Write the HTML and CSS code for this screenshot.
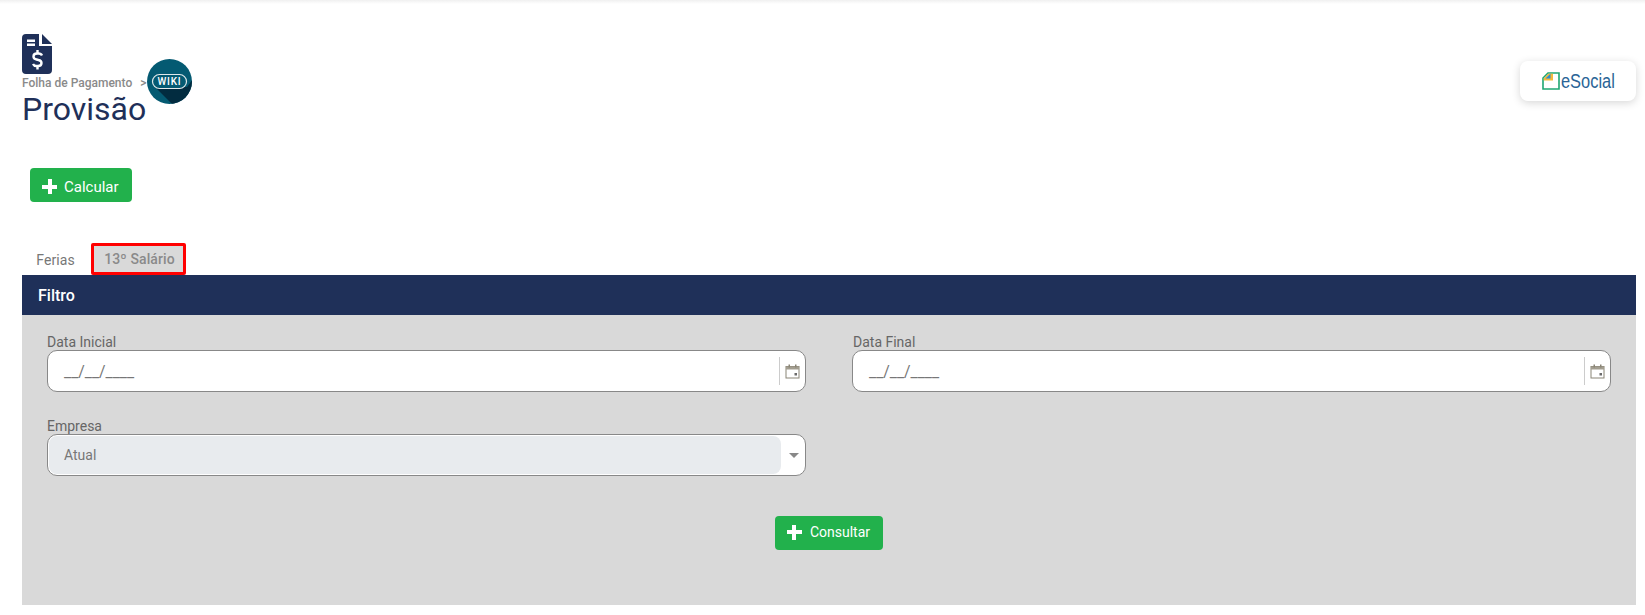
FILE: index.html
```html
<!DOCTYPE html>
<html lang="en">
<head>
  <meta charset="UTF-8">
  <title>Provisão</title>
  <link rel="stylesheet" href="styles.css">
</head>
<body>
  <div class="topbar"></div>

  <header class="page-head">
    <div class="head-left">
      <svg class="doc-icon" width="30" height="40" viewBox="0 0 30 40">
        <path fill="#1f3059" d="M4 0H17V12H30V36a4 4 0 0 1-4 4H4a4 4 0 0 1-4-4V4a4 4 0 0 1 4-4Z"/>
        <path fill="#1f3059" d="M20 0 30 10H20Z"/>
        <rect x="5" y="5.500" width="8" height="2.500" fill="#fff"/>
        <rect x="5" y="9.500" width="8" height="2.500" fill="#fff"/>
        <path fill="none" stroke="#fff" stroke-width="2.400" d="M20 21.500c-.6-1.300-2-2-3.500-2h-1.500c-2 0-3.500 1.200-3.500 3s1.200 2.600 3 3l2 .5c1.800.4 3 1.300 3 3s-1.500 3-3.500 3h-1.500c-1.500 0-2.900-.7-3.500-2"/>
        <path fill="none" stroke="#fff" stroke-width="2.400" d="M15.500 16v3.500M15.500 32v3.500"/>
      </svg>
      <div class="crumbs">
        <span>Folha de Pagamento</span>
        <span class="crumb-sep">&gt;</span>
        <span class="wiki">
          <svg width="45" height="45" viewBox="0 0 45 45">
            <defs><clipPath id="wikiClip"><circle cx="22.500" cy="22.500" r="22.500"/></clipPath></defs>
            <circle cx="22.500" cy="22.500" r="22.500" fill="#045a72"/>
            <path clip-path="url(#wikiClip)" fill="#022c40" d="M8 28H40L46 20V46H26Z"/>
            <rect x="5.500" y="15.500" width="34" height="14" rx="7" fill="#045a72" stroke="#dfe8ea" stroke-width="1.200"/>
            <text x="22.500" y="26" class="wiki-text" text-anchor="middle">WIKI</text>
          </svg>
        </span>
      </div>
      <h1 class="page-title">Provisão</h1>
    </div>
    <div class="esocial-card">
      <svg width="18" height="18" viewBox="0 0 18 18">
        <path d="M6 1H17V17H1V6Z" fill="#fff" stroke="#1fa672" stroke-width="1.600"/>
        <path d="M1.800 6.500 6.300 1.800H11V8.500H1.800Z" fill="#f5b93c"/>
        <path d="M3.500 6.500 8.500 1.800V6.500Z" fill="#2b8fd0"/>
      </svg>
      <span class="esocial-text">eSocial</span>
    </div>
  </header>

  <div class="actions">
    <button class="btn"><span class="plus"></span>Calcular</button>
  </div>

  <nav class="tabs">
    <a class="tab">Ferias</a>
    <a class="tab active">13º Salário</a>
  </nav>

  <section class="panel">
    <div class="panel-head">Filtro</div>
    <div class="panel-body">
      <div class="fields">
        <div class="field">
          <label>Data Inicial</label>
          <div class="input">
            <span class="mask">__/__/____</span>
            <span class="addon">
              <svg width="15" height="15" viewBox="0 0 15 15">
                <rect x="1" y="2.500" width="13" height="11.500" fill="#fff" stroke="#8a8577"/>
                <rect x="1" y="2.500" width="13" height="3" fill="#a39e90"/>
                <rect x="3.500" y="0.500" width="1.500" height="3" fill="#8a8577"/>
                <rect x="10" y="0.500" width="1.500" height="3" fill="#8a8577"/>
                <rect x="9.500" y="9" width="2.500" height="2.500" fill="#6b6b6b"/>
              </svg>
            </span>
          </div>
        </div>
        <div class="field field-final">
          <label>Data Final</label>
          <div class="input">
            <span class="mask">__/__/____</span>
            <span class="addon">
              <svg width="15" height="15" viewBox="0 0 15 15">
                <rect x="1" y="2.500" width="13" height="11.500" fill="#fff" stroke="#8a8577"/>
                <rect x="1" y="2.500" width="13" height="3" fill="#a39e90"/>
                <rect x="3.500" y="0.500" width="1.500" height="3" fill="#8a8577"/>
                <rect x="10" y="0.500" width="1.500" height="3" fill="#8a8577"/>
                <rect x="9.500" y="9" width="2.500" height="2.500" fill="#6b6b6b"/>
              </svg>
            </span>
          </div>
        </div>
        <div class="field">
          <label>Empresa</label>
          <div class="input select">
            <span class="select-box">Atual</span>
            <span class="caret"></span>
          </div>
        </div>
      </div>
      <div class="panel-actions">
        <button class="btn btn-small"><span class="plus"></span>Consultar</button>
      </div>
    </div>
  </section>
</body>
</html>
```

FILE: styles.css
```css
* {
  box-sizing: border-box;
}

body {
  margin: 0;
  height: 615px;
  overflow: hidden;
  background: #fff;
  font-family: Roboto, "Liberation Sans", sans-serif;
  color: #555;
}

.topbar {
  height: 4px;
  background: linear-gradient(#f0f0f0, #fff);
}

.page-head {
  display: flex;
  justify-content: space-between;
  align-items: flex-start;
  padding: 30px 9px 0 22px;
}

.doc-icon {
  display: block;
}

.crumbs {
  display: flex;
  align-items: center;
  height: 16px;
  margin-top: 1px;
  font-size: 12px;
  font-weight: 500;
  color: #8a8a8a;
}

.crumb-sep {
  margin-left: 8px;
}

.wiki {
  display: block;
  width: 45px;
  height: 45px;
  margin: -16px 0 -13px 1px;
}

.wiki svg {
  display: block;
}

.wiki-text {
  font-family: Roboto, sans-serif;
  font-size: 10px;
  font-weight: 500;
  letter-spacing: .8px;
  fill: #fff;
}

.page-title {
  margin: 0;
  font-size: 32px;
  font-weight: 400;
  line-height: 36px;
  color: #1f3059;
}

.esocial-card {
  display: flex;
  align-items: center;
  justify-content: center;
  gap: 1px;
  width: 116px;
  height: 40px;
  margin-top: 27px;
  background: #fff;
  border-radius: 8px;
  box-shadow: 0 2px 8px rgba(0, 0, 0, .16);
}

.esocial-text {
  width: 54px;
  font-family: "Liberation Sans", sans-serif;
  font-size: 20px;
  color: #2a6496;
  transform: scaleX(.82);
  transform-origin: left;
}

.actions {
  padding: 41px 0 0 30px;
}

.btn {
  display: inline-flex;
  align-items: center;
  gap: 7px;
  height: 34px;
  padding: 3px 13px 0 12px;
  border: 0;
  border-radius: 4px;
  background: #22b14c;
  color: #fff;
  font-family: inherit;
  font-size: 15px;
  font-weight: 400;
}

.plus {
  position: relative;
  display: block;
  width: 15px;
  height: 15px;
}

.plus::before,
.plus::after {
  content: "";
  position: absolute;
  background: #fff;
}

.plus::before {
  left: 0;
  right: 0;
  top: 5.500px;
  height: 4px;
}

.plus::after {
  top: 0;
  bottom: 0;
  left: 5.500px;
  width: 4px;
}

.tabs {
  display: flex;
  margin: 41px 0 0 22px;
  height: 32px;
}

.tab {
  display: flex;
  align-items: center;
  justify-content: center;
  font-size: 14px;
  color: #777;
  letter-spacing: .1px;
}

.tab:first-child {
  width: 67px;
  margin-right: 2px;
  padding-top: 2px;
}

.tab.active {
  width: 95px;
  padding-left: 2px;
  background: #d9d9d9;
  border: 3px solid #f00;
  border-radius: 2px;
  font-weight: 500;
  color: #8a8a8a;
}

.panel {
  margin: 0 9px 0 22px;
}

.panel-head {
  display: flex;
  align-items: center;
  height: 40px;
  padding-left: 16px;
  background: #1f3059;
  color: #fff;
  font-size: 16px;
  font-weight: 500;
}

.panel-body {
  height: 290px;
  padding: 17px 25px 0;
  background: #d9d9d9;
}

.fields {
  display: grid;
  grid-template-columns: 759px 759px;
  column-gap: 46px;
  row-gap: 24px;
}

.field label {
  display: block;
  height: 18px;
  font-size: 14px;
  line-height: 20px;
  color: #666;
}

.field-final label {
  padding-left: 1px;
}

.input {
  display: flex;
  align-items: center;
  justify-content: space-between;
  height: 42px;
  padding-left: 16px;
  background: #fff;
  border: 1px solid #888;
  border-radius: 10px;
  font-size: 14px;
  color: #777;
  overflow: hidden;
}

.mask {
  font-size: 15.800px;
}

.addon {
  display: flex;
  align-items: center;
  justify-content: center;
  width: 26px;
  height: 28px;
  border-left: 1px solid #ccc;
}

.select {
  padding: 1px 0 1px 1px;
}

.select-box {
  display: flex;
  align-items: center;
  width: 732px;
  height: 100%;
  padding-left: 15px;
  background: #e8ebee;
  border-radius: 8px;
}

.caret {
  margin-right: 6px;
  border-top: 5px solid #888;
  border-left: 5.500px solid transparent;
  border-right: 5.500px solid transparent;
}

.panel-actions {
  display: flex;
  justify-content: center;
  margin-top: 40px;
}

.btn-small {
  gap: 8px;
  padding: 0 13px 2px 12px;
  font-size: 14px;
}
```
